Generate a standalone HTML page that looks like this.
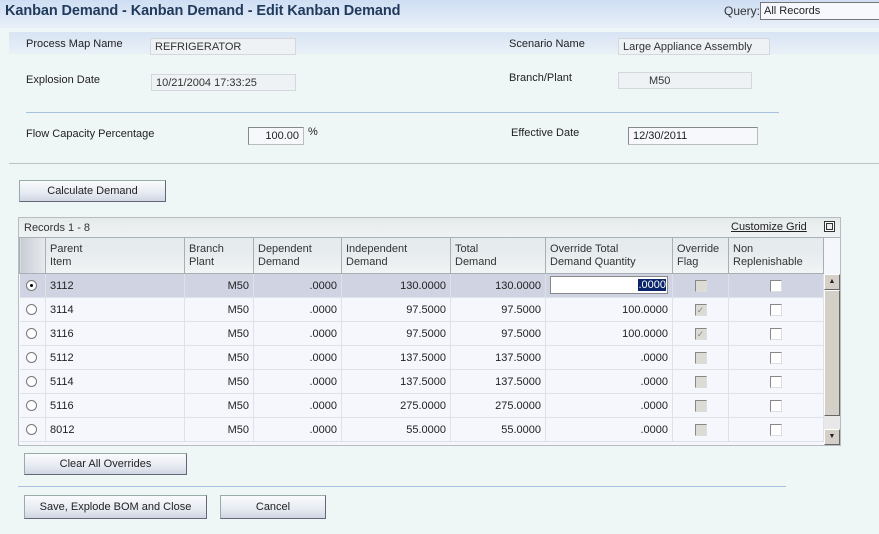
<!DOCTYPE html>
<html><head><style>
*{margin:0;padding:0;box-sizing:border-box}
body{width:879px;height:534px;background:#eff6f6;font-family:"Liberation Sans",sans-serif;font-size:11px;color:#222;position:relative;overflow:hidden}
.a{position:absolute;white-space:nowrap}
.fld{position:absolute;border:1px solid #d4d8dc;background:#eef2f4;height:17px;padding:2px 4px;font-size:11px;color:#333}
.inp{position:absolute;border:1px solid #bbb;border-top-color:#888;border-left-color:#888;background:#f6f8fc;height:18px;padding:2px 4px;font-size:11px}
.btn{position:absolute;border:1px solid #9aa;border-right-color:#667;border-bottom-color:#667;background:linear-gradient(#fafbfd,#e6eaf2 60%,#d0d6e2);text-align:center;font-size:11px;color:#222}
.grid{position:absolute;left:18px;top:217px;width:823px;height:229px;border:1px solid #b6bcc0;background:#f5f7fd}
table{position:absolute;left:0;top:20px;border-collapse:collapse;width:804px;table-layout:fixed}
th{height:35px;font-weight:normal;text-align:left;vertical-align:top;padding:5px 4px 0 4px;background:linear-gradient(#e6ebee,#e6ebee 40%,#f2f4f5);border:1px solid #a8b0b6;border-top:none;color:#333;line-height:13px}
td{height:24px;border-right:1px solid #dde2ea;border-bottom:1px solid #dde2ea;padding:1px 4px 0 4px;text-align:right;color:#222}
td.l{text-align:left}
tr.sel td{background:#cfd3e2}
.cb{display:inline-block;width:12px;height:12px;border:1px solid #888;border-right-color:#ddd;border-bottom-color:#ddd;background:#fff;vertical-align:middle}
.cb.d{background:#dcdcd4}
.rad{display:inline-block;width:11px;height:11px;border-radius:50%;border:1px solid #777;background:#fff;vertical-align:middle;position:relative}
</style></head><body>
<div class="a" style="left:0;top:0;width:879px;height:28px;background:linear-gradient(#cfdef4,#e8eff8)"></div>
<div class="a" style="left:5px;top:3px;font-size:14.5px;font-weight:bold;color:#1f3a5a;letter-spacing:-0.1px">Kanban Demand - Kanban Demand - Edit Kanban Demand</div>
<div class="a" style="left:724px;top:4px;font-size:12px;color:#333">Query:</div>
<div class="a" style="left:760px;top:2px;width:125px;height:18px;border:1px solid #777;background:#f6f8fe;padding:2px 3px;font-size:11px">All Records</div>
<div class="a" style="left:9px;top:32px;width:870px;height:22px;background:linear-gradient(#d8e4f4,#e9f0f7)"></div>
<div class="a" style="left:26px;top:38px">Process Map Name</div>
<div class="fld" style="left:150px;top:38px;width:146px">REFRIGERATOR</div>
<div class="a" style="left:509px;top:38px">Scenario Name</div>
<div class="fld" style="left:618px;top:38px;width:152px">Large Appliance Assembly</div>
<div class="a" style="left:26px;top:74px">Explosion Date</div>
<div class="fld" style="left:151px;top:74px;width:145px">10/21/2004 17:33:25</div>
<div class="a" style="left:509px;top:72px">Branch/Plant</div>
<div class="fld" style="left:618px;top:72px;width:134px;padding-left:30px">M50</div>
<div class="a" style="left:26px;top:112px;width:753px;height:1px;background:#a9c1e0"></div>
<div class="a" style="left:26px;top:128px">Flow Capacity Percentage</div>
<div class="inp" style="left:248px;top:127px;width:56px;text-align:right">100.00</div>
<div class="a" style="left:308px;top:126px">%</div>
<div class="a" style="left:511px;top:127px">Effective Date</div>
<div class="inp" style="left:628px;top:127px;width:130px">12/30/2011</div>
<div class="a" style="left:9px;top:163px;width:870px;height:1px;background:#bcc4c8"></div>
<div class="btn" style="left:19px;top:180px;width:147px;height:22px;line-height:20px">Calculate Demand</div>
<div class="grid">
<div class="a" style="left:0;top:0;width:821px;height:20px;background:linear-gradient(#e4eaea,#f0f3f3);border-bottom:1px solid #a8b0b6"></div>
<div class="a" style="left:5px;top:4px;color:#333">Records 1 - 8</div>
<div class="a" style="left:712px;top:3px;color:#222;text-decoration:underline">Customize Grid</div>
<div class="a" style="left:805px;top:3px;width:11px;height:11px;border:1px solid #333;box-shadow:inset 0 0 0 1px #fff, inset 0 0 0 2px #333"></div>
<table>
<colgroup><col style="width:26px"><col style="width:139px"><col style="width:69px"><col style="width:88px"><col style="width:109px"><col style="width:95px"><col style="width:127px"><col style="width:56px"><col style="width:95px"></colgroup>
<tr><th style="background:linear-gradient(90deg,#c8ccd4,#e8eaee)"></th><th>Parent<br>Item</th><th>Branch<br>Plant</th><th>Dependent<br>Demand</th><th>Independent<br>Demand</th><th>Total<br>Demand</th><th>Override Total<br>Demand Quantity</th><th>Override<br>Flag</th><th>Non<br>Replenishable</th></tr>
<tr class="sel"><td class="l" style="padding-left:6px"><span class="rad"><span style="position:absolute;left:3px;top:3px;width:3px;height:3px;background:#000;border-radius:50%"></span></span></td><td class="l">3112</td><td>M50</td><td>.0000</td><td>130.0000</td><td>130.0000</td><td style="padding:2px 4px"><div style="border:1px solid #888;background:#fff;height:18px;text-align:right;padding:2px 1px"><span style="background:#0a246a;color:#fff">.0000</span></div></td><td style="text-align:center"><span class="cb d"></span></td><td style="text-align:center"><span class="cb"></span></td></tr>
<tr><td class="l" style="padding-left:6px"><span class="rad"></span></td><td class="l">3114</td><td>M50</td><td>.0000</td><td>97.5000</td><td>97.5000</td><td>100.0000</td><td style="text-align:center"><span class="cb d" style="color:#888;font-size:9px;line-height:10px;text-align:center">✓</span></td><td style="text-align:center"><span class="cb"></span></td></tr>
<tr><td class="l" style="padding-left:6px"><span class="rad"></span></td><td class="l">3116</td><td>M50</td><td>.0000</td><td>97.5000</td><td>97.5000</td><td>100.0000</td><td style="text-align:center"><span class="cb d" style="color:#888;font-size:9px;line-height:10px;text-align:center">✓</span></td><td style="text-align:center"><span class="cb"></span></td></tr>
<tr><td class="l" style="padding-left:6px"><span class="rad"></span></td><td class="l">5112</td><td>M50</td><td>.0000</td><td>137.5000</td><td>137.5000</td><td>.0000</td><td style="text-align:center"><span class="cb d"></span></td><td style="text-align:center"><span class="cb"></span></td></tr>
<tr><td class="l" style="padding-left:6px"><span class="rad"></span></td><td class="l">5114</td><td>M50</td><td>.0000</td><td>137.5000</td><td>137.5000</td><td>.0000</td><td style="text-align:center"><span class="cb d"></span></td><td style="text-align:center"><span class="cb"></span></td></tr>
<tr><td class="l" style="padding-left:6px"><span class="rad"></span></td><td class="l">5116</td><td>M50</td><td>.0000</td><td>275.0000</td><td>275.0000</td><td>.0000</td><td style="text-align:center"><span class="cb d"></span></td><td style="text-align:center"><span class="cb"></span></td></tr>
<tr><td class="l" style="padding-left:6px"><span class="rad"></span></td><td class="l">8012</td><td>M50</td><td>.0000</td><td>55.0000</td><td>55.0000</td><td>.0000</td><td style="text-align:center"><span class="cb d"></span></td><td style="text-align:center"><span class="cb"></span></td></tr>
</table>
<div class="a" style="left:805px;top:56px;width:16px;height:171px;background:#d4d0c8;border-left:1px solid #eee"></div>
<div class="a" style="left:805px;top:56px;width:16px;height:16px;background:#d4d0c8;border:1px solid #fff;border-right-color:#666;border-bottom-color:#666;font-size:7px;text-align:center;line-height:14px">▲</div>
<div class="a" style="left:805px;top:72px;width:16px;height:126px;background:#d4d0c8;border:1px solid #fff;border-right-color:#666;border-bottom-color:#666"></div>
<div class="a" style="left:805px;top:198px;width:16px;height:13px;background:#e8e8e8"></div>
<div class="a" style="left:805px;top:211px;width:16px;height:16px;background:#d4d0c8;border:1px solid #fff;border-right-color:#666;border-bottom-color:#666;font-size:7px;text-align:center;line-height:14px">▼</div>
</div>
<div class="btn" style="left:24px;top:453px;width:163px;height:22px;line-height:20px">Clear All Overrides</div>
<div class="a" style="left:18px;top:486px;width:768px;height:1px;background:#a9c1e0"></div>
<div class="btn" style="left:24px;top:495px;width:183px;height:24px;line-height:22px">Save, Explode BOM and Close</div>
<div class="btn" style="left:220px;top:495px;width:106px;height:24px;line-height:22px">Cancel</div>
</body></html>
